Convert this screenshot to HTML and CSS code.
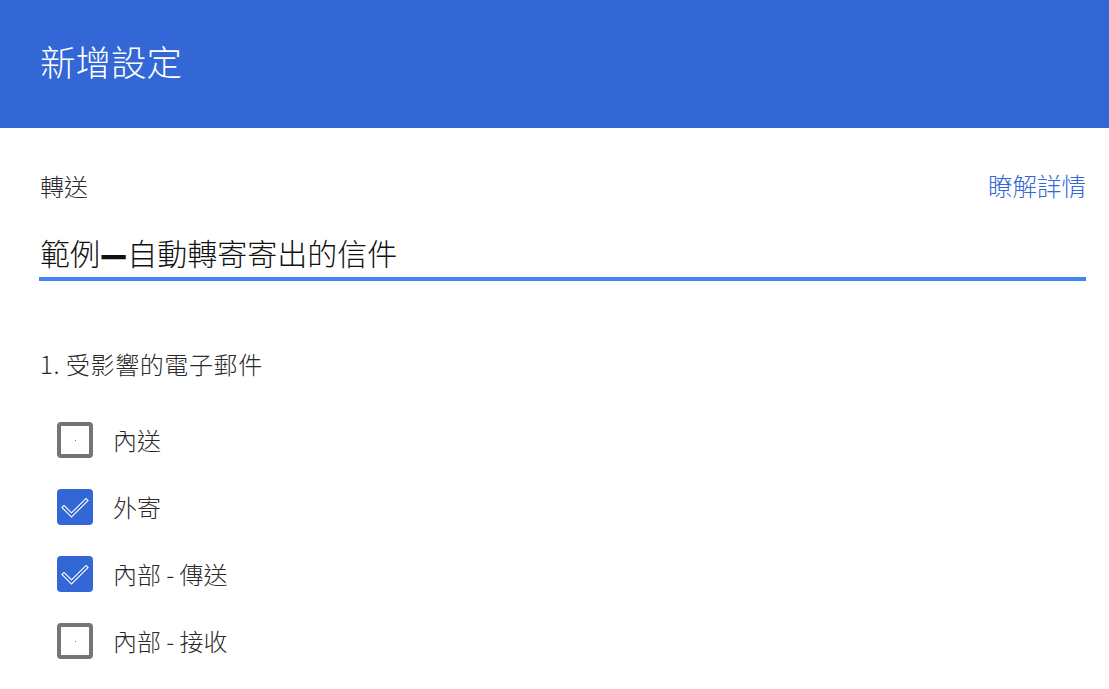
FILE: index.html
```html
<!DOCTYPE html>
<html lang="zh-Hant">
<head>
<meta charset="utf-8">
<title>新增設定</title>
<link rel="stylesheet" href="styles.css">
</head>
<body>
<header class="topbar">
  <h1 class="title">新增設定</h1>
</header>
<main class="content">
  <div class="label-row">
    <span class="field-label">轉送</span>
    <a class="learn-more" href="#">瞭解詳情</a>
  </div>
  <div class="name-field">範例<span class="dash">—</span>自動轉寄寄出的信件</div>
  <h2 class="section-title">1. 受影響的電子郵件</h2>
  <ul class="options">
    <li class="option">
      <span class="box"><span class="dot"></span></span>
      <span class="option-label">內送</span>
    </li>
    <li class="option">
      <span class="box checked">
        <svg viewBox="0 0 36 36" width="36" height="36" aria-hidden="true">
          <path d="M7 18.5 L14.5 26 L29 11.5" fill="none" stroke="#fff" stroke-width="4" stroke-linecap="square" stroke-linejoin="miter"/>
          <path d="M7 18.5 L14.5 26 L29 11.5" fill="none" stroke="#3367d6" stroke-width="1.8" stroke-linecap="square" stroke-linejoin="miter"/>
        </svg>
      </span>
      <span class="option-label">外寄</span>
    </li>
    <li class="option">
      <span class="box checked">
        <svg viewBox="0 0 36 36" width="36" height="36" aria-hidden="true">
          <path d="M7 18.5 L14.5 26 L29 11.5" fill="none" stroke="#fff" stroke-width="4" stroke-linecap="square" stroke-linejoin="miter"/>
          <path d="M7 18.5 L14.5 26 L29 11.5" fill="none" stroke="#3367d6" stroke-width="1.8" stroke-linecap="square" stroke-linejoin="miter"/>
        </svg>
      </span>
      <span class="option-label">內部 - 傳送</span>
    </li>
    <li class="option">
      <span class="box"><span class="dot"></span></span>
      <span class="option-label">內部 - 接收</span>
    </li>
  </ul>
</main>
</body>
</html>
```
FILE: styles.css
```css
html, body {
  margin: 0;
  padding: 0;
  background: #ffffff;
}
body {
  font-family: "Noto Sans CJK TC", "Noto Sans", sans-serif;
  font-weight: 300;
  color: #2a2a2a;
  overflow: hidden;
}
.topbar {
  background: #3367d6;
  height: 128px;
  display: flex;
  align-items: center;
  padding: 0 40px;
  box-sizing: border-box;
}
.title {
  margin: 0;
  color: #ffffff;
  font-size: 35.5px;
  font-weight: 300;
  line-height: 1;
  padding-bottom: 7px;
}
.content {
  padding: 0 23px 0 40px;
}
.label-row {
  display: flex;
  justify-content: space-between;
  align-items: center;
  height: 24px;
  margin-top: 46px;
}
.field-label {
  font-size: 24px;
  line-height: 24px;
  color: #2a2a2a;
}
.learn-more {
  font-size: 24.5px;
  line-height: 24px;
  color: #3367d6;
  text-decoration: none;
}
.name-field {
  margin-top: 36px;
  font-size: 30px;
  line-height: 36px;
  padding-bottom: 7px;
  border-bottom: 4px solid #4285f4;
  margin-left: -1px;
  padding-left: 1px;
  color: #111;
}
.dash {
  font-weight: 700;
  display: inline-block;
  transform: translateY(-2px) scaleY(1.5);
}
.section-title {
  margin: 71px 0 0;
  font-size: 24px;
  font-weight: 300;
  line-height: 24px;
  letter-spacing: 0.6px;
  color: #2a2a2a;
}
.options {
  list-style: none;
  margin: 46px 0 0;
  padding: 0 0 0 17px;
  display: flex;
  flex-direction: column;
  gap: 31px;
}
.option {
  display: flex;
  align-items: center;
  gap: 20px;
  height: 36px;
}
.box {
  width: 36px;
  height: 36px;
  box-sizing: border-box;
  border: 4px solid #757575;
  border-radius: 4px;
  display: flex;
  align-items: center;
  justify-content: center;
  flex: none;
}
.box.checked {
  border: none;
  background: #3367d6;
}
.box svg {
  display: block;
}
.dot {
  width: 1px;
  height: 1px;
  background: #777;
}
.option-label {
  font-size: 24px;
  line-height: 24px;
  color: #2a2a2a;
}
```
